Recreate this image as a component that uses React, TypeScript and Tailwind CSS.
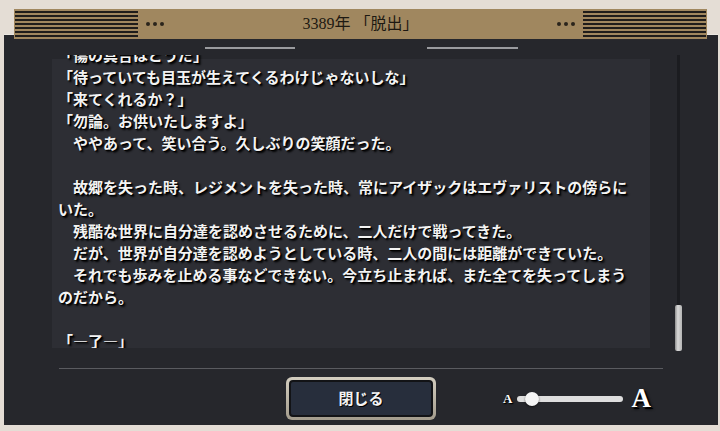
import React from "react";

const lines: string[] = [
  "「傷の具合はどうだ」",
  "「待っていても目玉が生えてくるわけじゃないしな」",
  "「来てくれるか？」",
  "「勿論。お供いたしますよ」",
  "　ややあって、笑い合う。久しぶりの笑顔だった。",
  "",
  "　故郷を失った時、レジメントを失った時、常にアイザックはエヴァリストの傍らに",
  "いた。",
  "　残酷な世界に自分達を認めさせるために、二人だけで戦ってきた。",
  "　だが、世界が自分達を認めようとしている時、二人の間には距離ができていた。",
  "　それでも歩みを止める事などできない。今立ち止まれば、また全てを失ってしまう",
  "のだから。",
  "",
  "「―了―」",
];

const stripes =
  "bg-[repeating-linear-gradient(to_bottom,#a0875f_0px,#a0875f_1px,#1f1d1b_1px,#1f1d1b_3px,#a0875f_3px,#a0875f_4px)]";

const Dots = () => (
  <div className="flex gap-[3px]">
    <span className="w-[4px] h-[4px] rounded-full bg-[#2a241c]" />
    <span className="w-[4px] h-[4px] rounded-full bg-[#2a241c]" />
    <span className="w-[4px] h-[4px] rounded-full bg-[#2a241c]" />
  </div>
);

export default function App() {
  return (
    <div className="w-[720px] h-[431px] bg-[#e4ddd5] pt-[9px] flex flex-col overflow-hidden font-['Noto_Sans_CJK_JP',sans-serif]">
      {/* Title bar */}
      <div className="relative z-10 ml-[14px] w-[693px] h-[30px] bg-[#a0875f] flex items-center">
        <div className={`ml-[1px] w-[123px] h-[28px] ${stripes}`} />
        <div className="ml-[8px]">
          <Dots />
        </div>
        <div className="flex-1 text-center text-[16px] leading-none text-[#1d1912] font-['Liberation_Serif','Noto_Sans_CJK_JP',serif] font-normal">
          3389年 「脱出」
        </div>
        <div className="mr-[8px]">
          <Dots />
        </div>
        <div className={`mr-[1px] w-[123px] h-[28px] ${stripes}`} />
      </div>

      {/* Panel */}
      <div className="-mt-[5px] ml-[4px] w-[714px] h-[391px] bg-[#26272c] border-t border-[#ece8e2] flex flex-col">
        <div className="pt-[12px] flex justify-center gap-[132px] pl-[1px]">
          <div className="w-[90px] h-[2px] bg-[#9a9b9f]" />
          <div className="w-[91px] h-[2px] bg-[#9a9b9f]" />
        </div>

        <div className="flex">
          <div className="ml-[48px] mt-[6px] w-[598px] h-[293px] overflow-hidden bg-[linear-gradient(to_bottom,transparent_4px,#2d2e34_4px)]">
            <div className="-mt-[11px] pl-[6px] text-[15px] font-bold text-[#f3f3f3] [text-shadow:1px_1px_0_#000,2px_2px_2px_#000]">
              {lines.map((l, i) => (
                <div key={i} className="h-[22px] leading-[22px] whitespace-pre">
                  {l}
                </div>
              ))}
            </div>
          </div>
          <div className="ml-[25px] mt-[6px] w-[7px] h-[296px] flex flex-col justify-end bg-[linear-gradient(to_right,transparent_2px,#1b1c20_2px,#1b1c20_5px,transparent_5px)]">
            <div className="h-[46px] w-[7px] rounded-[2px] bg-[linear-gradient(to_right,#8e8e8e,#d8d8d8_40%,#b4b4b4)]" />
          </div>
        </div>

        <div className="mt-[17px] ml-[55px] w-[604px] h-[1px] bg-[#5a5b60]" />

        <div className="mt-[8px] flex items-center">
          <button className="ml-[282px] w-[150px] h-[43px] rounded-[6px] p-[3px] bg-[linear-gradient(to_bottom,#d3cdbf,#a39c8d)]">
            <div className="w-full h-full rounded-[4px] border-2 border-[#121316] bg-[#272e3c] flex items-center justify-center text-[15px] font-bold text-[#f3f3f3] [text-shadow:1px_1px_0_#000]">
              閉じる
            </div>
          </button>

          <div className="ml-[67px] flex items-center">
            <span className="text-[13px] font-bold text-white font-['Liberation_Serif',serif] [text-shadow:1px_1px_0_#000,1px_1px_2px_#000]">
              A
            </span>
            <div className="relative ml-[5px] w-[106px] h-[6px] rounded-full bg-[#dedede]">
              <div className="absolute left-[8px] -top-[4px] w-[14px] h-[14px] rounded-full bg-[#f4f4f4] shadow-[0_1px_2px_rgba(0,0,0,0.6)]" />
            </div>
            <span className="ml-[8px] text-[27px] leading-none font-bold text-white font-['Liberation_Serif',serif] [text-shadow:2px_2px_0_#000,2px_2px_3px_#000]">
              A
            </span>
          </div>
        </div>
      </div>
    </div>
  );
}
